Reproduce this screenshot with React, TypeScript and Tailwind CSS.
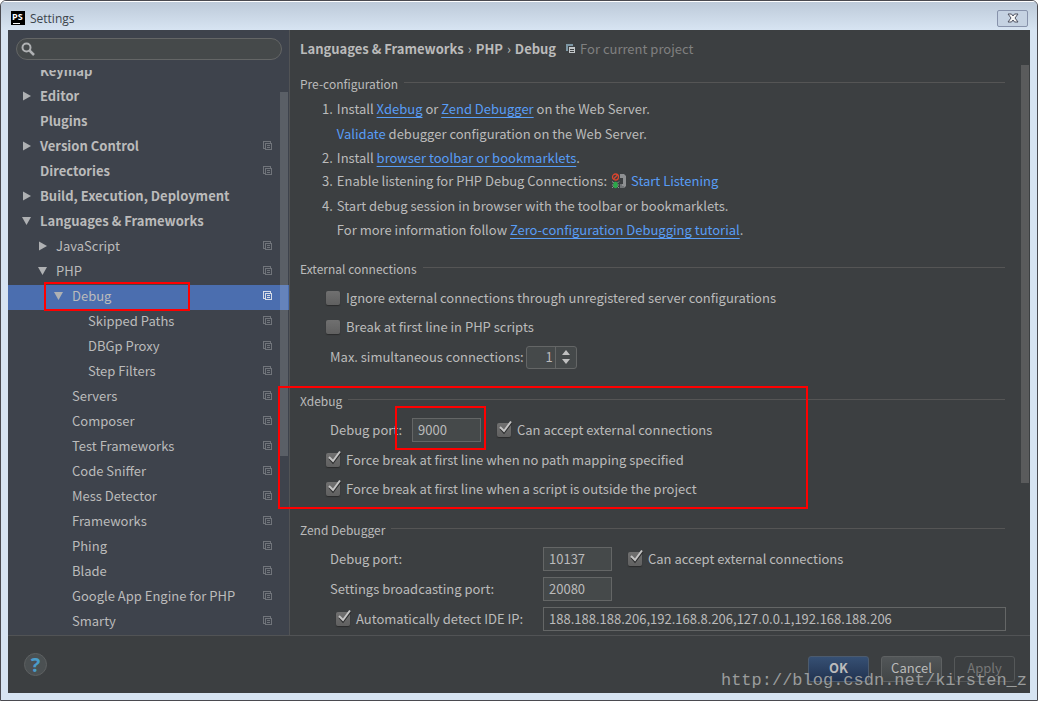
import { useState } from "react";
import type { ReactNode } from "react";

type Arrow = "open" | "closed" | "none";
type TreeItem = { label: string; level: number; arrow: Arrow; project: boolean; selected?: boolean };

const TREE: TreeItem[] = [
  { label: "Keymap", level: 0, arrow: "none", project: false },
  { label: "Editor", level: 0, arrow: "closed", project: false },
  { label: "Plugins", level: 0, arrow: "none", project: false },
  { label: "Version Control", level: 0, arrow: "closed", project: true },
  { label: "Directories", level: 0, arrow: "none", project: true },
  { label: "Build, Execution, Deployment", level: 0, arrow: "closed", project: false },
  { label: "Languages & Frameworks", level: 0, arrow: "open", project: false },
  { label: "JavaScript", level: 1, arrow: "closed", project: true },
  { label: "PHP", level: 1, arrow: "open", project: true },
  { label: "Debug", level: 2, arrow: "open", project: true, selected: true },
  { label: "Skipped Paths", level: 3, arrow: "none", project: true },
  { label: "DBGp Proxy", level: 3, arrow: "none", project: true },
  { label: "Step Filters", level: 3, arrow: "none", project: true },
  { label: "Servers", level: 2, arrow: "none", project: true },
  { label: "Composer", level: 2, arrow: "none", project: true },
  { label: "Test Frameworks", level: 2, arrow: "none", project: true },
  { label: "Code Sniffer", level: 2, arrow: "none", project: true },
  { label: "Mess Detector", level: 2, arrow: "none", project: true },
  { label: "Frameworks", level: 2, arrow: "none", project: true },
  { label: "Phing", level: 2, arrow: "none", project: true },
  { label: "Blade", level: 2, arrow: "none", project: true },
  { label: "Google App Engine for PHP", level: 2, arrow: "none", project: true },
  { label: "Smarty", level: 2, arrow: "none", project: true },
];

const INDENT = ["pl-3", "pl-7", "pl-11", "pl-15"];

function ProjectIcon() {
  return (
    <svg width="10" height="10" viewBox="0 0 10 10" fill="none" stroke="currentColor" shapeRendering="crispEdges">
      <path d="M2.5 7.5H0.5V0.5H7.5V2.5" />
      <path d="M2.5 2.5H8.5V8.5H2.5Z" />
      <path d="M4 4.5H7M4 6.5H7" />
    </svg>
  );
}

function TreeArrow({ state }: { state: Arrow }) {
  return (
    <svg width="16" height="12" viewBox="0 0 16 12" fill="#afb1b3">
      {state === "closed" && <path d="M3 1.5L11 6L3 10.5Z" />}
      {state === "open" && <path d="M2 2H11L6.500 10Z" />}
    </svg>
  );
}

function TreeRow({ item }: { item: TreeItem }) {
  return (
    <li className={item.selected ? "relative bg-[#4b6eaf]" : "relative"}>
      <button type="button" className={`flex h-[25px] w-full items-center pr-4 pb-[3px] text-left ${INDENT[item.level]}`}>
        <span className="w-5 shrink-0"><TreeArrow state={item.arrow} /></span>
        <span className={`grow whitespace-nowrap ${item.level === 0 ? "font-bold" : ""}`}>{item.label}</span>
        {item.project && (
          <span className={item.selected ? "text-[#d5dbe6]" : "text-[#70747a]"}><ProjectIcon /></span>
        )}
      </button>
      {item.selected && (
        <span className="pointer-events-none absolute -top-[3px] left-9 h-[29px] w-[146px] border-2 border-[#ff0000]" />
      )}
    </li>
  );
}

function Check({ label, checked = false, className = "" }: { label: string; checked?: boolean; className?: string }) {
  const [on, setOn] = useState(checked);
  return (
    <label className={`flex items-center gap-1.5 whitespace-nowrap ${className}`}>
      <span className="relative block size-3.5 shrink-0">
        <input
          type="checkbox"
          checked={on}
          onChange={(e) => setOn(e.target.checked)}
          className="block size-3.5 appearance-none rounded-[2px] bg-linear-to-b from-[#707070] to-[#606060] shadow-[0_1px_1px_#2a2b2c]"
        />
        {on && (
          <svg className="pointer-events-none absolute -top-1 left-0" width="17" height="17" viewBox="0 0 17 17" fill="none">
            <path d="M3.500 9.500L7 13.500L14.500 3.500" stroke="#2c2d2e" strokeWidth="2.200" />
            <path d="M3 8L7 12L14 2.500" stroke="#c4c4c4" strokeWidth="2" />
          </svg>
        )}
      </span>
      {label}
    </label>
  );
}

function Field({ id, value, className }: { id: string; value: string; className: string }) {
  return (
    <input
      id={id}
      defaultValue={value}
      className={`h-6 border border-[#646666] px-[5px] pb-0.5 outline-none ${className}`}
    />
  );
}

function Heading({ children }: { children: ReactNode }) {
  return (
    <h2 className="flex h-5 items-center gap-1.5 pr-[25px] text-xs whitespace-nowrap">
      {children}
      <span className="mb-[3px] h-px grow bg-[#555555]" />
    </h2>
  );
}

function Link({ children }: { children: ReactNode }) {
  return (
    <a href="#" className="text-[#589df6] underline underline-offset-3">{children}</a>
  );
}

function PhoneBugIcon() {
  return (
    <svg width="16" height="16" viewBox="0 0 16 16" fill="none">
      <circle cx="4.500" cy="4" r="3" stroke="#d8452f" strokeWidth="1.300" />
      <path d="M2.500 6L6.500 2" stroke="#d8452f" strokeWidth="1.300" />
      <path d="M1 8.500L3 10M1 12H8M1 15L3 13M8 8.500L6 10.500M8 15L6 13" stroke="#8f9a90" />
      <ellipse cx="4.500" cy="12" rx="2.200" ry="3.200" fill="#2ba84a" />
      <path d="M9 1H13L15 3V13L13 15H9V11H12V5H9Z" fill="#8e9092" />
      <path d="M10 11V15M12 13V15" stroke="#55585a" />
    </svg>
  );
}

export default function App() {
  return (
    <div className="flex h-screen flex-col overflow-hidden rounded-t-md border border-[#4a4a50] bg-[#d7e4f2] font-['Noto_Sans_CJK_SC',sans-serif] text-[13px] text-[#bbbbbb]">
      <header className="flex h-[29px] shrink-0 items-center gap-[5px] border-t border-white bg-linear-to-b from-[#bdcad9] to-[#d7e4f2] pr-[9px] pl-2.5 pt-1">
        <svg width="14" height="14" viewBox="0 0 14 14">
          <rect width="14" height="14" fill="#000" />
          <text x="1" y="9" fontSize="9" fontWeight="700" fill="#fff" fontFamily="Open Sans">PS</text>
          <rect x="2" y="12" width="7" height="1" fill="#fff" />
        </svg>
        <h1 className="grow pt-0.5 font-['Open_Sans',sans-serif] text-xs text-[#3c444c]">Settings</h1>
        <button type="button" aria-label="Close" className="grid h-[17px] w-[31px] place-items-center rounded-[2px] border border-[#8792ab] bg-[#c5d2e2]">
          <svg width="12" height="10" viewBox="0 0 12 10">
            <path d="M1 1H4.500L6 3L7.500 1H11L8 5L11 9H7.500L6 7L4.500 9H1L4 5Z" fill="#f6f6f6" stroke="#4d5060" />
          </svg>
        </button>
      </header>

      <div className="mx-[7px] mb-[7px] flex min-h-0 grow flex-col bg-[#3c3f41]">
        <div className="flex min-h-0 grow">
          <aside className="relative flex w-[282px] shrink-0 flex-col border-r border-[#515355] bg-[#3e434c]">
            <div className="pt-2 pr-[7px] pb-2.5 pl-2">
              <label className="flex h-[22px] items-center rounded-full border border-[#646666] bg-[#45494a] pl-1">
                <svg width="14" height="14" viewBox="0 0 14 14" fill="none" stroke="#afb1b3">
                  <circle cx="5.500" cy="5.500" r="4" strokeWidth="2" />
                  <path d="M8.500 8.500L13 13" strokeWidth="2.500" />
                </svg>
                <input type="search" aria-label="Search settings" className="min-w-0 grow bg-transparent px-1.5 outline-none" />
              </label>
            </div>
            <nav className="min-h-0 grow overflow-hidden">
              <ul className="-mt-2.5">
                {TREE.map((item) => <TreeRow key={item.label} item={item} />)}
              </ul>
            </nav>
            <span className="absolute top-[62px] right-px h-[364px] w-2 bg-white/15" />
          </aside>

          <main className="relative min-w-0 grow pl-2.5 [clip-path:inset(0_0_0_-12px)]">
            <div className="flex h-[38px] items-center gap-1 whitespace-nowrap">
              <span className="font-bold">Languages &amp; Frameworks</span>
              <span>›</span>
              <span className="font-bold">PHP</span>
              <span>›</span>
              <span className="font-bold">Debug</span>
              <span className="ml-1.5 flex items-center gap-1 text-[#808080]">
                <svg width="10" height="10" viewBox="0 0 10 10" shapeRendering="crispEdges">
                  <path d="M0 0H7V2H2V7H0Z" fill="#7d97a5" />
                  <path d="M3 3H9V9H3Z" fill="#c3c7c9" />
                  <path d="M4 5.500H8M4 7.500H8" stroke="#3c3f41" />
                </svg>
                For current project
              </span>
            </div>

            <section className="pt-1.5">
              <Heading>Pre-configuration</Heading>
              <ol className="pt-0.5 pl-[22px] leading-[25px] whitespace-nowrap">
                <li className="flex gap-1">
                  <span>1.</span>
                  <div>
                    <p>Install <Link>Xdebug</Link> or <Link>Zend Debugger</Link> on the Web Server.</p>
                    <p><a href="#" className="text-[#589df6]">Validate</a> debugger configuration on the Web Server.</p>
                  </div>
                </li>
                <li className="flex h-[23px] gap-1 leading-6"><span>2.</span><p>Install <Link>browser toolbar or bookmarklets</Link>.</p></li>
                <li className="flex h-6 items-center gap-1 leading-6">
                  <span>3.</span>
                  <span>Enable listening for PHP Debug Connections:</span>
                  <a href="#" className="flex items-center gap-1 text-[#589df6]"><PhoneBugIcon />Start Listening</a>
                </li>
                <li className="flex gap-1">
                  <span>4.</span>
                  <div>
                    <p>Start debug session in browser with the toolbar or bookmarklets.</p>
                    <p className="h-6 leading-6">For more information follow <Link>Zero-configuration Debugging tutorial</Link>.</p>
                  </div>
                </li>
              </ol>
            </section>

            <section className="pt-[17px]">
              <Heading>External connections</Heading>
              <div className="flex flex-col gap-[5px] pt-[7px] pl-[26px]">
                <Check className="h-6" label="Ignore external connections through unregistered server configurations" />
                <Check className="h-6" label="Break at first line in PHP scripts" />
                <div className="flex h-[26px] items-center gap-0.5 pl-1">
                  <label htmlFor="max-connections">Max. simultaneous connections:</label>
                  <div className="flex h-[23px] w-[51px] rounded-[3px] border border-[#646666] bg-[#45494a]">
                    <input id="max-connections" defaultValue="1" className="w-7 min-w-0 grow bg-transparent pr-0.5 text-right outline-none" />
                    <button type="button" aria-label="Change value" className="grid w-[21px] shrink-0 place-items-center border-l border-[#646666]">
                      <svg width="8" height="14" viewBox="0 0 8 14" fill="#c0c0c0"><path d="M0 5L4 0L8 5ZM0 9L4 14L8 9Z" /></svg>
                    </button>
                  </div>
                </div>
              </div>
            </section>

            <section className="relative pt-[21px]">
              <Heading>Xdebug</Heading>
              <div className="flex flex-col gap-[5px] pt-1.5 pl-[26px]">
                <div className="flex h-[26px] items-center pl-1">
                  <label htmlFor="xdebug-port" className="w-[82px] whitespace-nowrap">Debug port:</label>
                  <span className="relative flex">
                    <Field id="xdebug-port" value="9000" className="w-[69px] bg-[#45494a]" />
                    <span className="pointer-events-none absolute -top-3 -left-[17px] h-11 w-[91px] border-2 border-[#ff0000]" />
                  </span>
                  <Check className="pl-4" label="Can accept external connections" checked />
                </div>
                <Check className="h-6" label="Force break at first line when no path mapping specified" checked />
                <Check className="h-6" label="Force break at first line when a script is outside the project" checked />
              </div>
              <span className="pointer-events-none absolute top-4 -left-[22px] h-[123px] w-[530px] border-2 border-[#ff0000]" />
            </section>

            <section className="pt-[19px]">
              <Heading>Zend Debugger</Heading>
              <div className="grid grid-cols-[213px_1fr] items-center gap-y-1.5 pt-[7px] pr-6 pl-[30px] whitespace-nowrap">
                <label htmlFor="zend-port">Debug port:</label>
                <div className="flex items-center">
                  <Field id="zend-port" value="10137" className="w-[69px] bg-[#45494a]" />
                  <Check className="pl-4" label="Can accept external connections" checked />
                </div>
                <label htmlFor="broadcast-port">Settings broadcasting port:</label>
                <Field id="broadcast-port" value="20080" className="w-[69px] bg-[#45494a]" />
                <Check className="pl-1.5" label="Automatically detect IDE IP:" checked />
                <Field id="ide-ip" value="188.188.188.206,192.168.8.206,127.0.0.1,192.168.188.206" className="w-full bg-[#3c3f41]" />
              </div>
            </section>
            <span className="absolute top-[35px] right-px h-[418px] w-2 bg-[#5a5b5c]" />
          </main>
        </div>

        <footer className="relative flex h-[58px] shrink-0 items-center gap-3 border-t border-[#515355] pr-[15px] pl-4">
          <button type="button" aria-label="Help" className="mr-auto grid size-[23px] place-items-center rounded-full border border-[#5d6061] bg-[#4b5052] font-['Open_Sans',sans-serif] text-xl leading-none font-bold text-[#4a9cc9]">?</button>
          <button type="button" className="mt-2 h-[26px] w-[61px] rounded-[3px] border border-[#4c5b6e] bg-linear-to-b from-[#365074] to-[#223350] pb-0.5 font-bold">OK</button>
          <button type="button" className="mt-2 h-[26px] w-[61px] rounded-[3px] border border-[#5e6162] bg-linear-to-b from-[#525658] to-[#414546] pb-0.5">Cancel</button>
          <button type="button" className="mt-2 h-[26px] w-[61px] rounded-[3px] border border-[#555859] pb-0.5 text-[#777777]">Apply</button>
          <span className="pointer-events-none absolute right-[3px] bottom-0.5 font-['Liberation_Mono',monospace] text-[17px] leading-5 text-[#9a9c9c]">http://blog.csdn.net/kirsten_z</span>
        </footer>
      </div>
    </div>
  );
}
